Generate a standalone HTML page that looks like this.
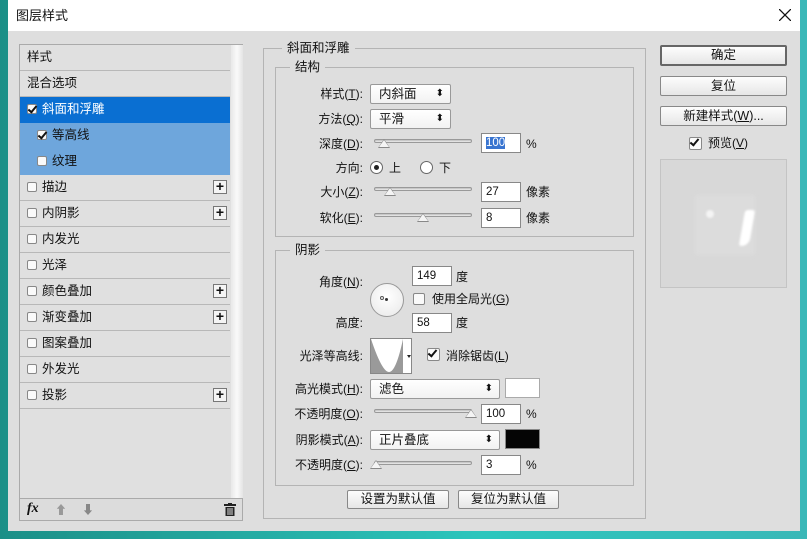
<!DOCTYPE html>
<html><head><meta charset="utf-8"><style>
*{margin:0;padding:0;box-sizing:border-box}
body{width:807px;height:539px;overflow:hidden;position:relative;background:linear-gradient(90deg,#1b8f87,#2cc6bd 60%,#3ab8b8);font-family:"Liberation Sans","Noto Sans CJK SC",sans-serif;font-size:12px;line-height:14px;color:#111}
.row{left:20px;width:210px;height:26px;border-bottom:1px solid #b8b8b8;background:#e0e0e0;padding:5px 0 0 7px;font-size:12.5px;line-height:15px}
.cb{display:inline-block;width:10px;height:10px;border:1px solid #888;background:#fafafa;border-radius:2px;vertical-align:-1px;margin-right:5px;position:relative}
.cb.on::after{content:"";position:absolute;left:2px;top:-1px;width:3px;height:7px;border:solid #111;border-width:0 2px 2px 0;transform:rotate(40deg)}
.a{position:absolute}
.plus{position:absolute;right:3px;top:5px;width:14px;height:14px;border:1px solid #777;background:#f4f4f4;font-weight:bold;font-size:14px;line-height:11px;text-align:center}
.fs{border:1px solid #b4b4b4}
.leg{background:#dedede;padding:0 5px;line-height:15px}
.lab{text-align:right;width:110px;font-size:12px}
.sel{height:20px;border:1px solid #999;background:linear-gradient(#fff,#f2f2f2);border-radius:2px;padding:1px 0 0 8px;font-size:12.5px;line-height:16px}
.sel::after{content:"⬍";position:absolute;right:6px;top:1px;font-size:10px}
.inp{height:20px;border:1px solid #888;background:#fff;padding:2px 0 0 4px;font-size:11.5px;line-height:14px}
.sl{height:4px;border:1px solid #999;border-radius:2px;background:linear-gradient(#bbb,#eee)}
.th{width:0;height:0;border-left:6px solid transparent;border-right:6px solid transparent;border-bottom:9px solid #888}
.th::after{content:"";position:absolute;left:-5px;top:1px;border-left:5px solid transparent;border-right:5px solid transparent;border-bottom:7px solid #f4f4f4}
.btn{border:1px solid #888;background:linear-gradient(#fdfdfd,#e6e6e6);border-radius:2px;text-align:center;font-size:12.5px;line-height:15px;padding-top:1px}
#win{left:8px;top:0;width:792px;height:531px;background:#dedede}
#title{left:0;top:0;width:792px;height:31px;background:#fff;font-size:13px;padding:9px 0 0 8px}
</style></head><body>
<div id="win" class="a">
<div id="title" class="a">图层样式</div>
<svg class="a" style="left:771px;top:9px" width="12" height="12"><path d="M0 0L12 12M12 0L0 12" stroke="#111" stroke-width="1.3"/></svg>
</div>
<div class="a" style="left:19px;top:44px;width:224px;height:477px;border:1px solid #aaa;background:#e0e0e0"></div>
<div class="a" style="left:231px;top:45px;width:12px;height:453px;background:linear-gradient(90deg,#e8e8e8,#fafafa,#e4e4e4)"></div>
<div class="a row" style="top:45px">样式</div>
<div class="a row" style="top:71px">混合选项</div>
<div class="a row" style="top:97px;background:#0a6fd2;color:#fff;border-color:#0a6fd2"><span class="cb on"></span>斜面和浮雕</div>
<div class="a row" style="top:123px;background:#6ea6dc;border-color:#6ea6dc;padding-left:17px"><span class="cb on"></span>等高线</div>
<div class="a row" style="top:149px;background:#6ea6dc;border-color:#6ea6dc;padding-left:17px"><span class="cb"></span>纹理</div>
<div class="a row" style="top:175px"><span class="cb"></span>描边<span class="plus">+</span></div>
<div class="a row" style="top:201px"><span class="cb"></span>内阴影<span class="plus">+</span></div>
<div class="a row" style="top:227px"><span class="cb"></span>内发光</div>
<div class="a row" style="top:253px"><span class="cb"></span>光泽</div>
<div class="a row" style="top:279px"><span class="cb"></span>颜色叠加<span class="plus">+</span></div>
<div class="a row" style="top:305px"><span class="cb"></span>渐变叠加<span class="plus">+</span></div>
<div class="a row" style="top:331px"><span class="cb"></span>图案叠加</div>
<div class="a row" style="top:357px"><span class="cb"></span>外发光</div>
<div class="a row" style="top:383px"><span class="cb"></span>投影<span class="plus">+</span></div>
<div class="a" style="left:20px;top:498px;width:222px;height:22px;border-top:1px solid #aaa;background:#dcdcdc"></div>
<div class="a" style="left:27px;top:502px;font-family:'Liberation Serif',serif;font-style:italic;font-weight:bold;font-size:14px">fx</div>
<div class="a" style="left:55px;top:503px;color:#999;font-size:12px">⬆</div>
<div class="a" style="left:82px;top:503px;color:#888;font-size:12px">⬇</div>
<svg class="a" style="left:224px;top:503px" width="12" height="13"><rect x="0" y="1" width="12" height="2" fill="#222"/><rect x="4" y="0" width="4" height="2" fill="#222"/><rect x="1.5" y="4" width="9" height="9" fill="#222"/><rect x="3.5" y="5" width="1" height="7" fill="#ddd"/><rect x="5.5" y="5" width="1" height="7" fill="#ddd"/><rect x="7.5" y="5" width="1" height="7" fill="#ddd"/></svg>
<div class="a fs" style="left:263px;top:48px;width:383px;height:471px"></div>
<div class="a leg" style="left:282px;top:41px;font-size:12.5px">斜面和浮雕</div>
<div class="a fs" style="left:275px;top:67px;width:359px;height:170px"></div>
<div class="a leg" style="left:290px;top:60px;font-size:12.5px">结构</div>
<div class="a lab" style="left:253px;top:87px">样式(<u>T</u>):</div>
<div class="a sel" style="left:370px;top:84px;width:81px">内斜面</div>
<div class="a lab" style="left:253px;top:112px">方法(<u>Q</u>):</div>
<div class="a sel" style="left:370px;top:109px;width:81px">平滑</div>
<div class="a lab" style="left:253px;top:137px">深度(<u>D</u>):</div>
<div class="a sl" style="left:374px;top:139px;width:98px"></div>
<div class="a th" style="left:378px;top:139px"></div>
<div class="a inp" style="left:481px;top:133px;width:40px"><span style="background:#3874d0;color:#fff">100</span></div>
<div class="a" style="left:526px;top:137px">%</div>
<div class="a lab" style="left:253px;top:161px">方向:</div>
<div class="a" style="left:370px;top:161px;width:13px;height:13px;border:1px solid #666;border-radius:50%;background:#fff"><div class="a" style="left:3px;top:3px;width:5px;height:5px;border-radius:50%;background:#222"></div></div>
<div class="a" style="left:389px;top:161px">上</div>
<div class="a" style="left:420px;top:161px;width:13px;height:13px;border:1px solid #666;border-radius:50%;background:#fff"></div>
<div class="a" style="left:439px;top:161px">下</div>
<div class="a lab" style="left:253px;top:185px">大小(<u>Z</u>):</div>
<div class="a sl" style="left:374px;top:187px;width:98px"></div>
<div class="a th" style="left:384px;top:187px"></div>
<div class="a inp" style="left:481px;top:182px;width:40px">27</div>
<div class="a" style="left:526px;top:185px">像素</div>
<div class="a lab" style="left:253px;top:211px">软化(<u>E</u>):</div>
<div class="a sl" style="left:374px;top:213px;width:98px"></div>
<div class="a th" style="left:417px;top:213px"></div>
<div class="a inp" style="left:481px;top:208px;width:40px">8</div>
<div class="a" style="left:526px;top:211px">像素</div>
<div class="a fs" style="left:275px;top:250px;width:359px;height:236px"></div>
<div class="a leg" style="left:290px;top:243px;font-size:12.5px">阴影</div>
<div class="a lab" style="left:253px;top:275px">角度(<u>N</u>):</div>
<div class="a" style="left:370px;top:283px;width:34px;height:34px;border:1px solid #999;border-radius:50%;background:radial-gradient(circle at 50% 40%,#fff,#e8e8e8)"><div class="a" style="left:9px;top:12px;width:4px;height:4px;border:1px solid #555;border-radius:50%"></div><div class="a" style="left:14px;top:14px;width:3px;height:3px;background:#333;border-radius:50%"></div></div>
<div class="a inp" style="left:412px;top:266px;width:40px">149</div>
<div class="a" style="left:456px;top:270px">度</div>
<div class="a cb" style="left:413px;top:293px;width:12px;height:12px"></div>
<div class="a" style="left:432px;top:292px">使用全局光(<u>G</u>)</div>
<div class="a lab" style="left:253px;top:316px">高度:</div>
<div class="a inp" style="left:412px;top:313px;width:40px">58</div>
<div class="a" style="left:456px;top:316px">度</div>
<div class="a lab" style="left:253px;top:349px">光泽等高线:</div>
<svg class="a" style="left:370px;top:338px" width="42" height="36"><rect x="0.5" y="0.5" width="41" height="35" fill="#fff" stroke="#888"/><path d="M1 1 Q12 34 19 34 Q26 34 33 1 L33 35 L1 35Z" fill="#9a9a9a"/><path d="M37 17 l4 0 l-2 3z" fill="#222"/></svg>
<div class="a cb on" style="left:427px;top:348px;width:13px;height:13px"></div>
<div class="a" style="left:446px;top:349px">消除锯齿(<u>L</u>)</div>
<div class="a lab" style="left:253px;top:382px">高光模式(<u>H</u>):</div>
<div class="a sel" style="left:370px;top:379px;width:130px">滤色</div>
<div class="a" style="left:505px;top:378px;width:35px;height:20px;border:1px solid #aaa;background:#fff"></div>
<div class="a lab" style="left:253px;top:407px">不透明度(<u>O</u>):</div>
<div class="a sl" style="left:374px;top:409px;width:98px"></div>
<div class="a th" style="left:465px;top:409px"></div>
<div class="a inp" style="left:481px;top:404px;width:40px">100</div>
<div class="a" style="left:526px;top:407px">%</div>
<div class="a lab" style="left:253px;top:433px">阴影模式(<u>A</u>):</div>
<div class="a sel" style="left:370px;top:430px;width:130px">正片叠底</div>
<div class="a" style="left:505px;top:429px;width:35px;height:20px;border:1px solid #888;background:#050505"></div>
<div class="a lab" style="left:253px;top:458px">不透明度(<u>C</u>):</div>
<div class="a sl" style="left:374px;top:461px;width:98px"></div>
<div class="a th" style="left:370px;top:460px"></div>
<div class="a inp" style="left:481px;top:455px;width:40px">3</div>
<div class="a" style="left:526px;top:458px">%</div>
<div class="a btn" style="left:347px;top:490px;width:102px;height:19px">设置为默认值</div>
<div class="a btn" style="left:458px;top:490px;width:101px;height:19px">复位为默认值</div>
<div class="a btn" style="left:660px;top:45px;width:127px;height:21px;border:2px solid #666">确定</div>
<div class="a btn" style="left:660px;top:76px;width:127px;height:20px;padding-top:2px">复位</div>
<div class="a btn" style="left:660px;top:106px;width:127px;height:20px;padding-top:2px">新建样式(<u>W</u>)...</div>
<div class="a cb on" style="left:689px;top:137px;width:13px;height:13px"></div>
<div class="a" style="left:708px;top:136px">预览(<u>V</u>)</div>
<div class="a" style="left:660px;top:159px;width:127px;height:129px;border:1px solid #c4c4c4;background:#d8d8d8"></div>
<div class="a" style="left:695px;top:195px;width:60px;height:60px;background:#dcdcdc;filter:blur(2px)"></div>
<div class="a" style="left:742px;top:210px;width:10px;height:36px;background:#fff;border-radius:3px 3px 8px 3px;filter:blur(1px);transform:skewX(-10deg)"></div>
<div class="a" style="left:706px;top:210px;width:8px;height:8px;background:#f4f4f4;border-radius:50%;filter:blur(1px)"></div>
</body></html>
